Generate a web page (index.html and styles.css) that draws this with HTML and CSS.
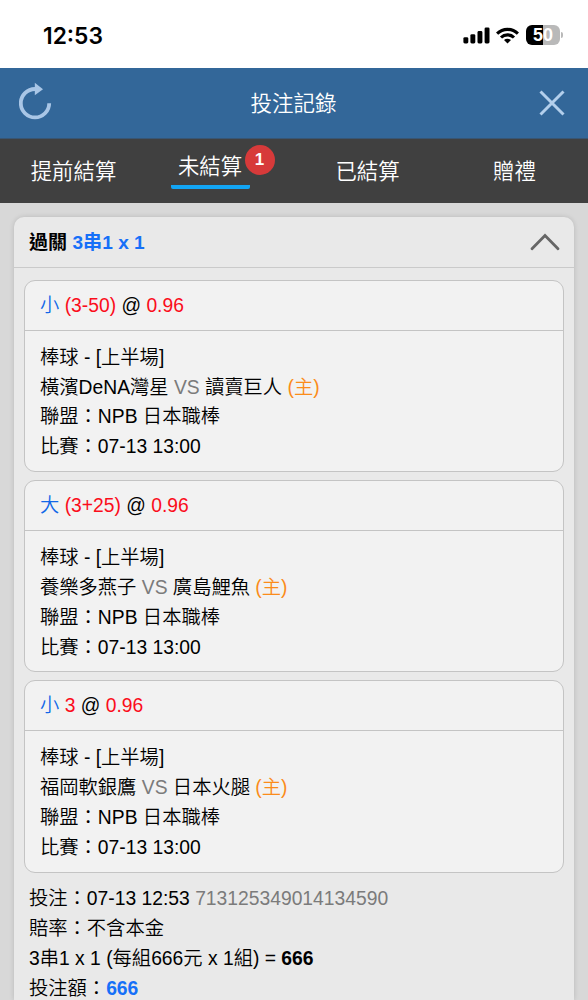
FILE: index.html
```html
<!DOCTYPE html>
<html lang="zh-Hant">
  <head>
    <meta charset="UTF-8" />
    <meta name="viewport" content="width=device-width, initial-scale=1.0" />
    <title>投注記錄</title>
    <link rel="stylesheet" href="styles.css">
  </head>
  <body>
    <div class="status-bar">
      <span class="time">12:53</span>
      <div class="status-icons">
        <svg class="signal" width="27" height="17" viewBox="0 0 27 17">
          <rect x="0.4" y="10.2" width="4.9" height="6.2" rx="1.4" />
          <rect x="7.4" y="7.2" width="4.9" height="9.2" rx="1.4" />
          <rect x="14.5" y="4" width="4.9" height="12.4" rx="1.4" />
          <rect x="21.6" y="0.4" width="4.9" height="16" rx="1.4" />
        </svg>
        <svg class="wifi" width="23" height="17" viewBox="0 0 23 17">
          <g fill="none" stroke="#000" stroke-width="3.1">
            <path d="M1.1 6.6a14.9 14.9 0 0 1 20.8 0" />
            <path d="M5 10.5a9.3 9.3 0 0 1 13 0" />
          </g>
          <path d="M11.5 16.6L8 13.1a5 5 0 0 1 7 0z" />
        </svg>
        <div class="battery"><span>50</span></div>
      </div>
    </div>

    <div class="title-bar">
      <svg width="34" height="38" viewBox="0 0 34 38">
        <path d="M30.2 21.2A14.2 14.2 0 1 1 16 7" fill="none" stroke="#a9c6e6" stroke-width="3.8" />
        <path d="M15.8 0.8l8.2 6.4-8.2 6z" fill="#a9c6e6" />
      </svg>
      <h1>投注記錄</h1>
      <svg class="close" width="26" height="26" viewBox="0 0 26 26">
        <path d="M1.5 1.5l23 23M24.5 1.5l-23 23" stroke="#b3cfec" stroke-width="3" />
      </svg>
    </div>

    <div class="tabs">
      <div class="tab">提前結算</div>
      <div class="tab active"><span class="label">未結算<span class="badge">1</span></span></div>
      <div class="tab">已結算</div>
      <div class="tab">贈禮</div>
    </div>

    <div class="content">
      <div class="card">
        <div class="card-head">
          <div>過關 <span class="blue">3串1 x 1</span></div>
          <svg width="30" height="18" viewBox="0 0 30 18">
            <path d="M2 15.7L15 2.5l13 13.2" fill="none" stroke="#666" stroke-width="2.8" stroke-linecap="round" />
          </svg>
        </div>

        <div class="bets">
          <div class="bet">
            <div class="bet-head"><span class="pick">小</span> <span class="red">(3-50)</span> @ <span class="red">0.96</span></div>
            <div class="bet-body">
              <div>棒球 - [上半場]</div>
              <div>橫濱DeNA灣星 <span class="gray">VS</span> 讀賣巨人 <span class="home">(主)</span></div>
              <div>聯盟：NPB 日本職棒</div>
              <div>比賽：07-13 13:00</div>
            </div>
          </div>
          <div class="bet">
            <div class="bet-head"><span class="pick">大</span> <span class="red">(3+25)</span> @ <span class="red">0.96</span></div>
            <div class="bet-body">
              <div>棒球 - [上半場]</div>
              <div>養樂多燕子 <span class="gray">VS</span> 廣島鯉魚 <span class="home">(主)</span></div>
              <div>聯盟：NPB 日本職棒</div>
              <div>比賽：07-13 13:00</div>
            </div>
          </div>
          <div class="bet">
            <div class="bet-head"><span class="pick">小</span> <span class="red">3</span> @ <span class="red">0.96</span></div>
            <div class="bet-body">
              <div>棒球 - [上半場]</div>
              <div>福岡軟銀鷹 <span class="gray">VS</span> 日本火腿 <span class="home">(主)</span></div>
              <div>聯盟：NPB 日本職棒</div>
              <div>比賽：07-13 13:00</div>
            </div>
          </div>
        </div>

        <div class="summary">
          <div>投注：07-13 12:53 <span class="gray">713125349014134590</span></div>
          <div>賠率：不含本金</div>
          <div>3串1 x 1 (每組666元 x 1組) = <b>666</b></div>
          <div>投注額：<b class="blue">666</b></div>
        </div>
      </div>
    </div>
  </body>
</html>
```
FILE: styles.css
```css
* {
  box-sizing: border-box;
}
body {
  margin: 0;
  height: 1000px;
  overflow: hidden;
  display: flex;
  flex-direction: column;
  font-family: 'Liberation Sans', 'Noto Sans CJK TC', sans-serif;
  font-size: 19.3px;
  font-weight: 350;
  line-height: 29.9px;
  color: #000;
  background-color: #d8d8d8;
}
svg {
  display: block;
}
b {
  font-weight: bold;
}
.status-bar {
  flex: none;
  display: flex;
  justify-content: space-between;
  height: 68px;
  padding: 20px 24px 0 43px;
  background-color: #fff;
}
.time {
  padding-top: 1px;
  font-family: Inter, sans-serif;
  font-size: 22.8px;
  font-weight: 600;
}
.status-icons {
  display: flex;
  align-items: center;
  height: 30px;
}
.wifi {
  margin: 0 7px 0 6px;
}
.battery {
  position: relative;
  width: 34px;
  height: 20px;
  border-radius: 6px;
  background: linear-gradient(to right, #000 50%, #b9b9b9 50%);
  color: #fff;
  font-family: 'Liberation Sans', sans-serif;
  font-size: 18px;
  font-weight: 700;
  line-height: 20px;
  text-align: center;
  margin-right: 4px;
}
.battery::after {
  content: '';
  position: absolute;
  right: -3px;
  top: 7px;
  width: 2px;
  height: 6px;
  border-radius: 0 2px 2px 0;
  background-color: #b9b9b9;
}
.title-bar {
  flex: none;
  display: flex;
  align-items: center;
  justify-content: space-between;
  height: 71px;
  padding: 0 23px 0 19px;
  background-color: #336799;
  border-bottom: 1px solid #385573;
}
.title-bar svg:first-child {
  margin-top: -4px;
}
.title-bar h1 {
  margin: 0 0 0 -5px;
  padding-top: 3px;
  font-size: 21.5px;
  font-weight: 350;
  color: #fff;
}
.tabs {
  flex: none;
  display: grid;
  grid-template-columns: repeat(4, 1fr);
  height: 64px;
  background-color: #404040;
  color: #fff;
  font-size: 21.4px;
}
.tab {
  padding-top: 19px;
  text-align: center;
}
.tab.active {
  padding: 14px 21px 0 0;
}
.label {
  position: relative;
  display: inline-block;
  width: 79px;
  height: 36px;
  border-bottom: 4px solid #12a5f4;
  border-radius: 2px;
}
.badge {
  position: absolute;
  left: 74px;
  top: -8px;
  width: 30px;
  height: 30px;
  border-radius: 50%;
  background-color: #d73a3a;
  font-size: 17px;
  font-weight: bold;
  line-height: 30px;
}
.content {
  flex: 1;
  min-height: 0;
  padding: 14px 14px 0;
}
.card {
  height: 100%;
  border-radius: 10px 10px 0 0;
  background-color: #e9e9e9;
  box-shadow: 0 0 5px rgba(0, 0, 0, 0.15);
}
.card-head {
  display: flex;
  align-items: center;
  justify-content: space-between;
  height: 51px;
  padding: 0 14px 0 15px;
  border-bottom: 1px solid #cacaca;
  font-size: 19.1px;
  font-weight: bold;
}
.card-head div {
  padding-top: 1px;
}
.blue {
  color: #1670f8;
}
.pick {
  color: #1268e8;
}
.red {
  color: #fb0d1b;
}
.gray {
  color: #7b7b7b;
}
.home {
  color: #fb8c1a;
}
.bets {
  display: flex;
  flex-direction: column;
  gap: 8px;
  padding: 12px 10px 0;
}
.bet {
  height: 192.2px;
  border: 1px solid #c4c4c4;
  border-radius: 11px;
  background-color: #f2f2f2;
}
.bet-head {
  height: 50px;
  padding: 10px 15px 0;
  border-bottom: 1px solid #c4c4c4;
}
.bet-body {
  padding: 11.6px 15px 0;
}
.summary {
  padding: 11.4px 15px 0;
}
```
